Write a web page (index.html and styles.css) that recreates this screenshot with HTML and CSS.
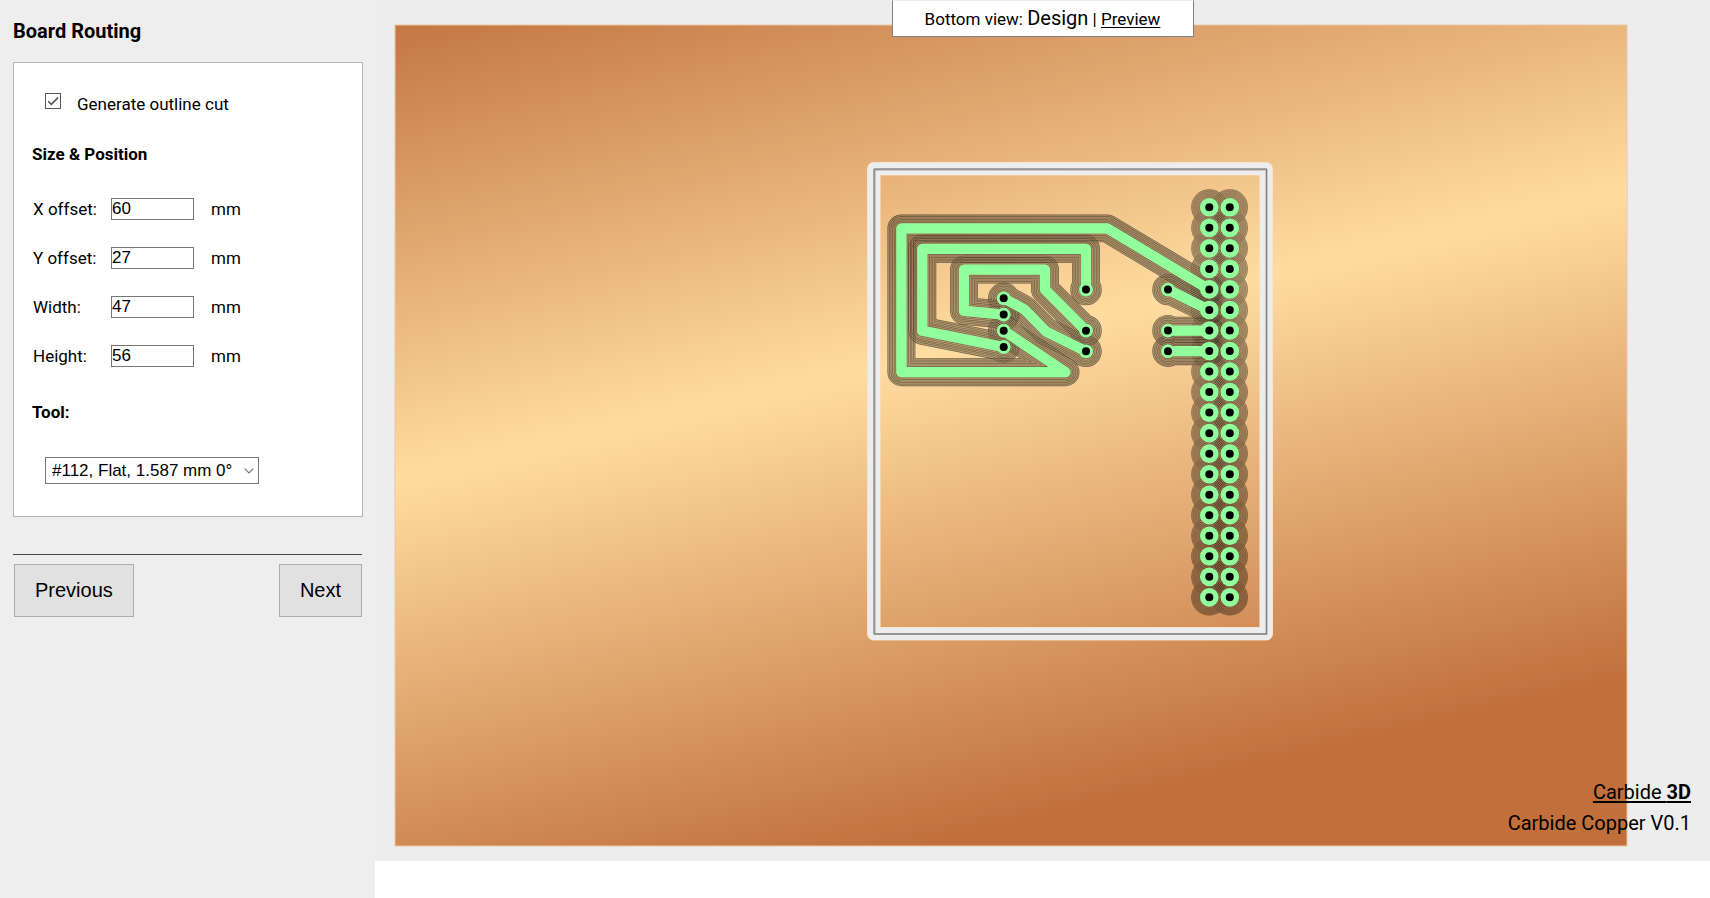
FILE: index.html
```html
<!DOCTYPE html>
<html lang="en">
<head>
<meta charset="utf-8">
<title>Carbide Copper</title>
<link rel="stylesheet" href="styles.css">
</head>
<body>
<div class="app">
  <aside class="sidebar">
    <h1 class="title">Board Routing</h1>
    <form class="panel" id="routing">
      <div class="check-row">
        <span class="check">
          <input class="check-box" type="checkbox" id="outline" checked>
          <svg class="check-mark" viewBox="0 0 16 16" aria-hidden="true"><path d="M3.2 8.2 6.3 11.3 13 4.6"/></svg>
        </span>
        <label for="outline">Generate outline cut</label>
      </div>
      <h2 class="subtitle">Size &amp; Position</h2>
      <div class="fields">
        <div class="field"><label class="name" for="xo">X offset:</label><input class="num" id="xo" type="text" value="60"><span>mm</span></div>
        <div class="field"><label class="name" for="yo">Y offset:</label><input class="num" id="yo" type="text" value="27"><span>mm</span></div>
        <div class="field"><label class="name" for="w">Width:</label><input class="num" id="w" type="text" value="47"><span>mm</span></div>
        <div class="field"><label class="name" for="h">Height:</label><input class="num" id="h" type="text" value="56"><span>mm</span></div>
      </div>
      <h2 class="subtitle"><label for="tool">Tool:</label></h2>
      <div class="select">
        <select class="select-box" id="tool"><option>#112, Flat, 1.587 mm 0°</option></select>
        <svg class="select-arrow" viewBox="0 0 10 6" aria-hidden="true"><path d="M.7.7 5 5 9.3.7"/></svg>
      </div>
    </form>
    <div class="nav">
      <button class="btn" type="button">Previous</button>
      <button class="btn" type="button">Next</button>
    </div>
  </aside>
  <main class="stage">
    <svg class="board" id="board" viewBox="395 25 1232 821" role="img" aria-label="Bottom view of the board">
      <defs>
        <linearGradient id="copper" x1="0" y1="0" x2=".36" y2="1.02">
          <stop offset="0" stop-color="#c47743"/>
          <stop offset=".484" stop-color="#ffdca0"/>
          <stop offset="1" stop-color="#c1703c"/>
        </linearGradient>
      </defs>
      <rect class="copper" x="395" y="25" width="1232" height="821"/>
      <rect class="cut-edge" x="873.8" y="168.8" width="392.4" height="465"/>
      <rect class="cut" x="873.8" y="168.8" width="392.4" height="465"/>
      <rect class="cut-line" x="874.5" y="169.5" width="392" height="464.5"/>
      <rect class="cut-core" x="874" y="169" width="392.5" height="465"/>
      <g id="clearance" class="clearance"></g>
      <g id="passes"></g>
      <g id="traces" class="traces"></g>
      <g id="holes"></g>
    </svg>
    <div class="views">Bottom view: <span class="current">Design</span> | <a class="link" href="#preview">Preview</a></div>
    <footer class="credit">
      <a class="link" href="#carbide3d">Carbide <b>3D</b></a>
      <span>Carbide Copper V0.1</span>
    </footer>
  </main>
</div>
<script src="board.js"></script>
</body>
</html>
```
FILE: styles.css
```css
* { box-sizing: border-box; }
body { margin: 0; background: #fff; color: #000; font: 17px/20px Roboto, sans-serif; }
.app { display: flex; align-items: flex-start; min-height: 100vh; }
.sidebar { flex: none; align-self: stretch; width: 375px; padding: 19px 12px 20px 13px; background: #eee; }
.title { margin: 0 0 19px; font-size: 20px; line-height: 24px; font-weight: 700; }
.panel { padding: 30px 18px 32px; border: 1px solid #b4b4b4; background: #fff; }
.check-row { display: flex; align-items: flex-start; gap: 16px; margin-left: 13px; }
.check { position: relative; display: flex; }
.check-box { appearance: none; width: 16px; height: 16px; margin: 0; border: 1px solid #555; background: #fff; }
.check-mark { position: absolute; inset: 0; fill: none; stroke: #555; stroke-width: 1.6; pointer-events: none; }
.check-row label { padding-top: 1px; }
.subtitle { margin: 30px 0 0; font-size: 17px; line-height: 20px; font-weight: 700; }
.fields { display: grid; gap: 27px; margin-top: 34px; }
.field { display: flex; align-items: center; height: 22px; padding-left: 1px; }
.name { width: 78px; }
.num { width: 83px; height: 22px; margin: 0 17px 0 0; padding: 0; border: 1px solid #767676; border-radius: 0; background: #fff; color: #000; font: 17px "Liberation Sans", Arial, sans-serif; }
.fields + .subtitle { margin-top: 35px; }
.select { position: relative; display: inline-block; margin: 35px 0 0 13px; vertical-align: top; }
.select-box { appearance: none; width: 214px; height: 27px; padding: 0 6px; border: 1px solid #767676; border-radius: 0; background: #fff; color: #000; font: 17px "Liberation Sans", Arial, sans-serif; }
.select-arrow { position: absolute; right: 5px; top: 11px; width: 10px; height: 6px; fill: none; stroke: #777; stroke-width: 1.2; pointer-events: none; }
.nav { display: flex; justify-content: space-between; margin: 37px 1px 0 0; padding: 9px 0 0 1px; border-top: 1px solid #444; }
.btn { height: 53px; padding: 0 20px; border: 1px solid #adadad; border-radius: 0; background: #e1e1e1; color: #000; font: 20px "Liberation Sans", Arial, sans-serif; }
.stage { position: relative; flex: 1; padding: 25px 83px 15px 20px; background: #ededed; }
.board { display: block; width: 100%; height: auto; overflow: visible; }
.copper { fill: url(#copper); stroke: #ebc8a4; stroke-width: 1; }
.cut-edge, .cut, .cut-line, .cut-core { fill: none; stroke-linejoin: round; }
.cut-edge { stroke: #f6dcb8; stroke-width: 13.6; }
.cut { stroke: #ededed; stroke-width: 12.6; }
.cut-line { stroke: #a8a8a8; stroke-width: 2; }
.cut-core { stroke: #808080; stroke-width: 1; }
.clearance { opacity: .27; stroke: #000; }
.traces { stroke: #90ff9c; }
.run { fill: none; stroke-linecap: round; stroke-linejoin: round; }
.pass { opacity: .36; }
.ring { fill: none; stroke: #000; stroke-opacity: .26; stroke-width: .7; }
.views { position: absolute; top: 0; left: 50%; width: 302px; height: 37px; padding-top: 5px; transform: translateX(-50%); border: 1px solid #808080; border-top-color: #ededed; background: #fff; text-align: center; line-height: 24px; }
.current { font-size: 20px; }
.link { color: inherit; text-decoration: underline; text-underline-offset: 2px; }
.credit { position: absolute; right: 19px; bottom: 26px; display: grid; justify-items: end; gap: 7px; font-size: 20px; line-height: 24px; }
```
FILE: board.js
```javascript
const NS = 'http://www.w3.org/2000/svg';
const PITCH = 20.53;
const TRACE = 10.3;
const SMALL = 6.9;
const BIG = 9.3;
const REACH = 8.8;
const STEP = 1.6;
const colA = 1209.3, colB = 1229.8, top0 = 207.3;

// Each net: a polyline and its pads [x, y, radius].
const nets = [
  { d: 'M1209.3 289.6 1107.3 228.4 901.4 228.4V372.2H1065.5L1003.7 330.7', pads: [[1003.7, 330.7, SMALL]] },
  { d: 'M1086 289.6V248.8H922.3V330.7L1003.7 347', pads: [[1086, 289.6, SMALL], [1003.7, 347, SMALL]] },
  { d: 'M1003.7 314.6 964 310.8V269.6H1045V289.5L1086 330.7', pads: [[1003.7, 314.6, SMALL], [1086, 330.7, SMALL]] },
  { d: 'M1003.7 298.3 1024.5 309.5 1046 331.5 1086 351.3', pads: [[1003.7, 298.3, SMALL], [1086, 351.3, SMALL]] },
  { d: 'M1168 289.6 1209.3 310', pads: [[1168, 289.6, SMALL]] },
  { d: 'M1168 330.6H1209.3', pads: [[1168, 330.6, SMALL]] },
  { d: 'M1168 351.2H1209.3', pads: [[1168, 351.2, SMALL]] }
];
const pins = [];
for (let i = 0; i < 20; i++) {
  pins.push([colA, top0 + i * PITCH, BIG], [colB, top0 + i * PITCH, BIG]);
}

function add(parent, tag, attrs) {
  const el = document.createElementNS(NS, tag);
  for (const k in attrs) el.setAttribute(k, attrs[k]);
  parent.appendChild(el);
  return el;
}
function grow(parent, net, by, color) {
  const c = color ? { stroke: color } : {};
  add(parent, 'path', { class: 'run', d: net.d, 'stroke-width': TRACE + 2 * by, ...c });
  net.pads.forEach(([x, y, r]) =>
    add(parent, 'path', { class: 'run', d: `M${x} ${y}h.01`, 'stroke-width': 2 * (r + by), ...c }));
}

const svg = document.getElementById('board');
const defs = svg.querySelector('defs');
const clearance = document.getElementById('clearance');
const passes = document.getElementById('passes');
const traces = document.getElementById('traces');
const holes = document.getElementById('holes');
const area = { x: 880, y: 180, width: 380, height: 450 };

nets.forEach((net, i) => {
  grow(clearance, net, REACH);
  grow(traces, net, 0);
  const mask = add(defs, 'mask', { id: 'pass' + i, maskUnits: 'userSpaceOnUse', ...area });
  for (let o = REACH; o > 0.5; o -= STEP) {
    grow(mask, net, o, '#fff');
    grow(mask, net, o - 0.7, '#000');
  }
  add(passes, 'rect', { class: 'pass', mask: `url(#pass${i})`, ...area });
  net.pads.forEach(([x, y]) => add(holes, 'circle', { cx: x, cy: y, r: 4 }));
});
pins.forEach(([x, y, r]) => {
  add(clearance, 'circle', { cx: x, cy: y, r: r + REACH, stroke: 'none' });
  for (let o = REACH - 0.3; o > 0.5; o -= STEP) add(passes, 'circle', { class: 'ring', cx: x, cy: y, r: r + o });
  add(traces, 'circle', { cx: x, cy: y, r: r, fill: '#90ff9c', stroke: 'none' });
  add(holes, 'circle', { cx: x, cy: y, r: 4 });
});
```
